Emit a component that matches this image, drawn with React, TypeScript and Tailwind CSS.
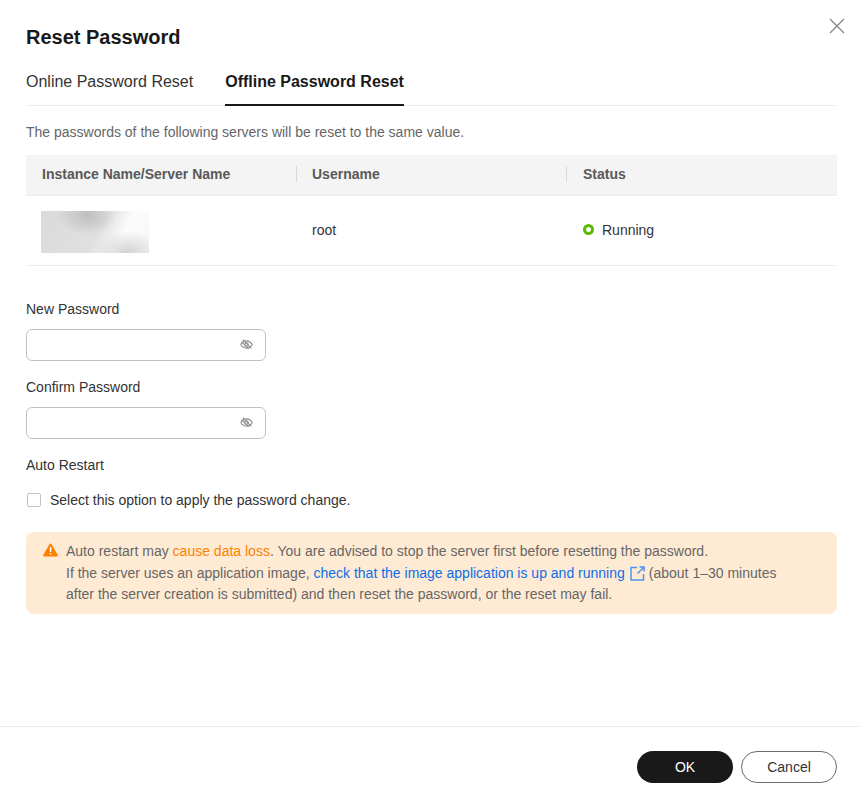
import React from "react";

const EyeOff = () => (
  <svg width="13" height="13" viewBox="0 0 14 14" fill="none" stroke="#8a8a8a" strokeWidth="1.100">
    <path d="M.8 7c1.600-2.600 3.700-3.900 6.200-3.900s4.600 1.300 6.200 3.900c-1.600 2.600-3.700 3.900-6.200 3.900S2.400 9.600.8 7z" />
    <circle cx="7" cy="7" r="1.900" />
    <path d="M3 1.800l9.200 9.400M1.500 3.800l7.800 7.800" />
  </svg>
);

function PasswordField({ label }: { label: string }) {
  return (
    <div className="flex flex-col">
      <label className="h-[21px] text-sm leading-[21px] text-[#333]">{label}</label>
      <div className="mt-[9px] flex h-8 w-[240px] items-center justify-end rounded-md border border-[#c2c2c2] bg-white pb-[2px] pr-[12px]">
        <EyeOff />
      </div>
    </div>
  );
}

export default function App() {
  return (
    <div className="relative flex h-[803px] w-[861px] flex-col overflow-hidden bg-white font-['Liberation_Sans',Arial,sans-serif]">
      <button className="absolute right-[16px] top-[18px] text-[#808080]" aria-label="Close">
        <svg width="16" height="16" viewBox="0 0 16 16" fill="none" stroke="currentColor" strokeWidth="1.200">
          <path d="M1 1l14 14M15 1L1 15" />
        </svg>
      </button>

      <main className="flex-1 pl-[26px] pr-[24px] pt-[25px]">
        <h1 className="text-[20px] font-bold leading-6 text-[#191919]">Reset Password</h1>

        <div className="mt-[9px] flex h-[48px] gap-8 border-b border-[#ededed] text-base">
          <div className="flex h-[47px] items-center text-[#333]">Online Password Reset</div>
          <div className="flex h-[48px] items-center border-b-2 border-[#191919] pt-[1px] font-bold text-[#191919]">Offline Password Reset</div>
        </div>

        <p className="mt-[16px] text-sm leading-[21px] text-[#666]">
          The passwords of the following servers will be reset to the same value.
        </p>

        <div className="mt-[12px] grid h-[41px] grid-cols-[270px_270px_1fr] items-center border-b border-[#ededed] bg-[#f4f4f4] pb-[2px] text-sm font-bold text-[#595959]">
          <div className="pl-4">Instance Name/Server Name</div>
          <div className="flex h-4 items-center border-l border-[#d9d9d9] pl-[15px]">Username</div>
          <div className="flex h-4 items-center border-l border-[#d9d9d9] pl-4">Status</div>
        </div>
        <div className="grid h-[70px] grid-cols-[270px_270px_1fr] items-center border-b border-[#ededed] pb-[2px] text-sm text-[#333]">
          <div className="pl-[15px] pt-[4px]">
            <div className="h-[42px] w-[108px] bg-[radial-gradient(ellipse_30px_20px_at_46px_4px,#bebebe_0,transparent_100%),radial-gradient(ellipse_34px_22px_at_86px_42px,#d2d2d2_0,transparent_100%),linear-gradient(115deg,#dadada_0%,#e0e0e0_52%,#fcfcfc_74%,#f6f6f6_100%)]" />
          </div>
          <div className="pl-4">root</div>
          <div className="flex items-center gap-[8px] pl-[17px]">
            <span className="h-[11px] w-[11px] rounded-full border-[3px] border-[#5fb800]" />
            <span>Running</span>
          </div>
        </div>

        <div className="mt-[33px] flex flex-col gap-[16px]">
          <PasswordField label="New Password" />
          <PasswordField label="Confirm Password" />
        </div>

        <div className="mt-[16px] h-[21px] text-sm leading-[21px] text-[#333]">Auto Restart</div>

        <label className="mt-[13px] flex h-[21px] items-center text-sm text-[#333]">
          <span className="ml-px h-[14px] w-[14px] rounded-[2px] border border-[#c2c2c2] bg-white" />
          <span className="ml-[9px]">Select this option to apply the password change.</span>
        </label>

        <div className="mt-[22px] flex h-[82px] gap-[8px] rounded-lg bg-[#ffebd4] pl-[17px] pt-[9px] text-sm leading-[21.500px] text-[#666]">
          <svg className="mt-[2px] shrink-0" width="15" height="14" viewBox="0 0 15 14">
            <path d="M7.500 .5a1 1 0 0 1 .9.500l6.300 11a1 1 0 0 1-.9 1.500H1.200a1 1 0 0 1-.9-1.500L6.600 1a1 1 0 0 1 .9-.5z" fill="#ff8000" />
            <rect x="6.800" y="4" width="1.500" height="5" fill="#fff" />
            <rect x="6.800" y="10" width="1.500" height="1.500" fill="#fff" />
          </svg>
          <p>
            Auto restart may <span className="text-[#ff8000]">cause data loss</span>. You are advised to stop the server first before resetting the password.
            <br />
            If the server uses an application image, <span className="text-[#0d6fe8]">check that the image application is up and running</span>
            <svg className="ml-[5px] mr-[4px] inline-block align-[-3px]" width="15" height="15" viewBox="0 0 15 15" fill="none" stroke="#4d94f0" strokeWidth="1.500">
              <path d="M7 1.500H1v12.500h12.500V8M7.500 7.500l6-6M9.500 1H14v4.500" />
            </svg>
            (about 1–30 minutes
            <br />
            after the server creation is submitted) and then reset the password, or the reset may fail.
          </p>
        </div>
      </main>

      <footer className="flex h-[77px] items-start justify-end gap-2 border-t border-[#ededed] pr-[24px] pt-[24px] text-sm">
        <button className="h-8 w-24 rounded-full bg-[#191919] text-white">OK</button>
        <button className="h-8 w-24 rounded-full border border-[#6b6b6b] bg-white text-[#333]">Cancel</button>
      </footer>
    </div>
  );
}
